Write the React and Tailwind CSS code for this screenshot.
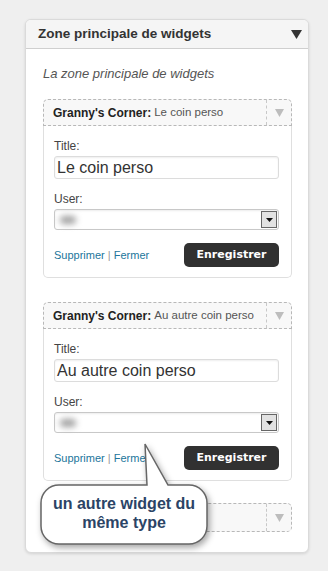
import React from "react";

function Tri({ w, h, color }) {
  return (
    <svg width={w} height={h} viewBox={`0 0 ${w} ${h}`}>
      <path d={`M0 0 L${w} 0 L${w / 2} ${h} Z`} fill={color} />
    </svg>
  );
}

function WidgetHead({ name, full }) {
  return (
    <div
      className={`flex h-[27px] border border-dashed border-[#b8b8b8] bg-[#f8f8f8] ${
        full ? "h-[29px] rounded-[5px]" : "rounded-t-[5px]"
      }`}
    >
      <div className="flex flex-1 items-center pl-[9px] text-[12px] whitespace-nowrap">
        {name && (
          <>
            <span className="font-bold text-[#222]">Granny's Corner:</span>
            <span className="ml-[3px] text-[11.5px] text-[#555]">{name}</span>
          </>
        )}
      </div>
      <div className="flex w-[25px] items-center justify-center border-l border-dashed border-[#c8c8c8]">
        <Tri w={9} h={8} color="#bdbdbd" />
      </div>
    </div>
  );
}

function Widget({ name, className }) {
  return (
    <div className={className}>
      <WidgetHead name={name} />
      <div className="rounded-b-[5px] border border-t-0 border-[#dfdfdf] bg-white pt-[13px] pr-[12px] pb-[10px] pl-[10px]">
        <div className="mb-[3px] text-[12px] leading-[14px] text-[#444]">Title:</div>
        <div className="flex h-[23px] items-center rounded-[3px] border border-[#dcdcdc] pl-[2px] text-[16px] text-[#333] shadow-[inset_0_1px_2px_rgba(0,0,0,0.07)]">
          {name}
        </div>
        <div className="mt-[13px] mb-[3px] text-[12px] leading-[14px] text-[#444]">User:</div>
        <div className="flex h-[21px] items-center justify-between rounded-[3px] border border-[#c8c8c8] pr-[1px] pl-[5px] shadow-[inset_0_1px_2px_rgba(0,0,0,0.08)]">
          <div className="h-[8px] w-[16px] rounded-full bg-[#a0a0a0] blur-[3px]" />
          <div className="flex h-[17px] w-[16px] items-center justify-center border border-[#666] bg-[#e2e2e2]">
            <Tri w={7} h={4} color="#111" />
          </div>
        </div>
        <div className="mt-[13px] flex items-center justify-between">
          <div className="text-[11px] text-[#21759b]">
            Supprimer <span className="text-[#999]">|</span> Fermer
          </div>
          <div className="flex h-[24px] w-[95px] items-center justify-center rounded-[5px] bg-[#313131] font-['DejaVu_Sans',sans-serif] text-[11px] font-bold text-white">
            Enregistrer
          </div>
        </div>
      </div>
    </div>
  );
}

export default function App() {
  return (
    <div className="relative h-[571px] w-[328px] overflow-hidden bg-[#efefef] pt-[19px] pl-[25px] font-['Liberation_Sans',Arial,sans-serif]">
      <div className="h-[534px] w-[284px] rounded-[6px] border border-[#dadada] bg-white shadow-[0_1px_3px_rgba(0,0,0,0.12)]">
        <div className="flex h-[29px] items-center justify-between rounded-t-[5px] border-b border-[#cfcfcf] bg-[#f5f5f5] pr-[6px] pl-[12px]">
          <span className="text-[13.5px] font-bold text-[#333]">Zone principale de widgets</span>
          <Tri w={11} h={9} color="#333" />
        </div>
        <div className="pt-[17px] pr-[16px] pl-[17px]">
          <p className="text-[13px] leading-[16px] text-[#555] italic">La zone principale de widgets</p>
          <Widget name="Le coin perso" className="mt-[17px]" />
          <Widget name="Au autre coin perso" className="mt-[24px]" />
          <div className="mt-[22px]">
            <WidgetHead full />
          </div>
        </div>
      </div>

      <svg
        className="absolute top-[440px] left-[36px] drop-shadow-[2px_3px_3px_rgba(0,0,0,0.35)]"
        width="180"
        height="112"
        viewBox="0 0 180 112"
      >
        <path
          d="M23 45 L111 45 L109 4 L132 45 L153 45 A18 18 0 0 1 171 63 L171 86 A18 18 0 0 1 153 104 L23 104 A18 18 0 0 1 5 86 L5 63 A18 18 0 0 1 23 45 Z"
          fill="#fff"
          stroke="#666"
          strokeWidth="1.5"
        />
      </svg>
      <div className="absolute top-[485px] left-[41px] flex h-[59px] w-[166px] flex-col items-center justify-center pb-[4px] text-center text-[16px] leading-[19px] font-bold text-[#2b4466]">
        <span>un autre widget du</span>
        <span>même type</span>
      </div>
    </div>
  );
}
